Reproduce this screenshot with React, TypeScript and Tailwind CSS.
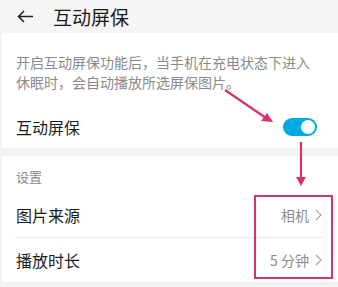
import React from "react";

// 互动屏保设置页，外加粉色标注（箭头 + 方框）。
const FONT = { fontFamily: '"Noto Sans CJK SC", "Noto Sans", sans-serif' };

function Chevron() {
  return (
    <svg width="7" height="12" viewBox="0 0 7 12" className="ml-[6px]">
      <path d="M1 1 L6 6 L1 11" fill="none" stroke="#a6a6a6" strokeWidth="1.2" />
    </svg>
  );
}

function ValueRow({ label, value }: { label: string; value: string }) {
  return (
    <div className="h-[44px] flex items-center justify-between pl-[14px] pr-[16px]">
      <span className="text-[16px] leading-[20px] text-[#1c1c1c]">{label}</span>
      <span className="flex items-center text-[14px] leading-[18px] text-[#8c8c8c]">
        {value}
        <Chevron />
      </span>
    </div>
  );
}

export default function App() {
  return (
    <div className="relative w-[338px] h-[287px] overflow-hidden bg-[#f2f2f2]" style={FONT}>
      <header className="h-[33px] flex items-center pl-[17px] bg-[#f5f5f5]">
        <svg width="17" height="13" viewBox="0 0 17 13">
          <path d="M16 6.5 H1.5 M7 1 L1.5 6.5 L7 12" fill="none" stroke="#222" strokeWidth="1.5" />
        </svg>
        <h1 className="ml-[19px] text-[19px] leading-[24px] text-[#1a1a1a]">互动屏保</h1>
      </header>

      <div className="ml-[2px] bg-white">
        <p className="w-[310px] pt-[19px] pb-[14px] pl-[14px] text-[14px] leading-[20px] text-[#8a8a8a]">
          开启互动屏保功能后，当手机在充电状态下进入休眠时，会自动播放所选屏保图片。
        </p>
        <div className="h-[42px] flex items-center justify-between pl-[14px] pr-[21px]">
          <span className="text-[16px] leading-[20px] text-[#1c1c1c]">互动屏保</span>
          <span className="w-[34px] h-[18px] rounded-full bg-[#00a9e0] flex items-center justify-end pr-[2px]">
            <span className="w-[14px] h-[14px] rounded-full bg-white" />
          </span>
        </div>
      </div>

      <div className="h-[8px]" />

      <div className="ml-[2px] bg-white">
        <div className="h-[37px] pt-[12px] pl-[14px] text-[13px] leading-[18px] text-[#8a8a8a]">设置</div>
        <ValueRow label="图片来源" value="相机" />
        <div className="ml-[13px] mr-[15px] h-px bg-[#ececec]" />
        <ValueRow label="播放时长" value="5 分钟" />
      </div>

      {/* 标注层 */}
      <svg className="absolute left-0 top-0 pointer-events-none" width="338" height="287" viewBox="0 0 338 287">
        <g stroke="#d4336f" strokeWidth="2.2" fill="#d4336f">
          <line x1="225" y1="90" x2="266" y2="118" />
          <polygon points="273,122 261,121 267,113" stroke="none" />
          <line x1="301" y1="142" x2="301" y2="178" />
          <polygon points="301,186 296,177 306,177" stroke="none" />
        </g>
      </svg>
      <div className="absolute left-[254px] top-[195px] w-[79px] h-[84px] border-2 border-[#d4336f]" />
    </div>
  );
}
